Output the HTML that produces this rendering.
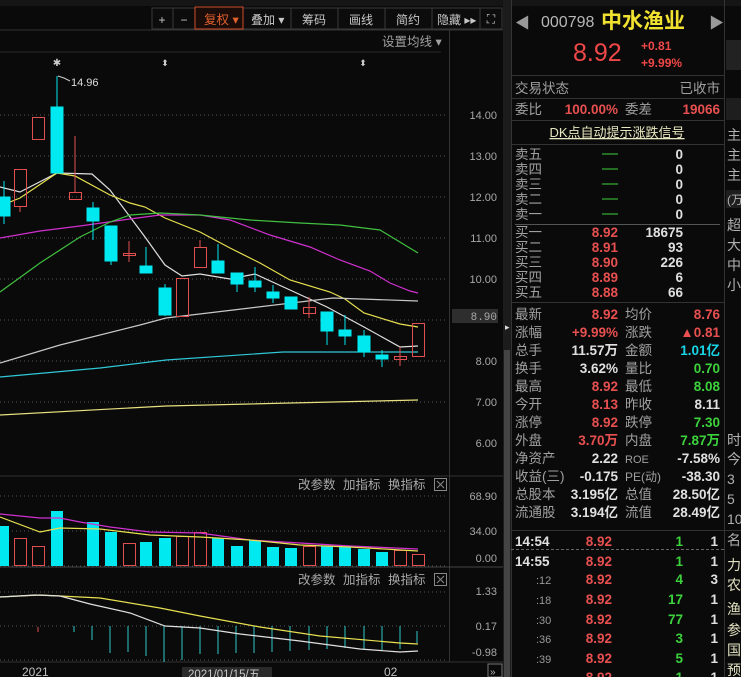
<!DOCTYPE html>
<html><head><meta charset="utf-8"><style>
html,body{margin:0;padding:0;background:#0a0a0a;overflow:hidden}
svg{display:block}
text{font-family:"Liberation Sans","Noto Sans CJK SC",sans-serif}
.ax{fill:#a8a8a8;font-size:11px;font-family:"Liberation Mono","Noto Sans CJK SC",monospace}
.tb{fill:#c8c8c8;font-size:12px}
.lb{fill:#a0a0a0;font-size:13.5px}
.r{fill:#e85050;font-weight:bold;font-size:13.5px}
.g{fill:#3cd23c;font-weight:bold;font-size:13.5px}
.w{fill:#e0e0e0;font-weight:bold;font-size:13.5px}
.c{fill:#19d6e6;font-weight:bold;font-size:13.5px}
</style></head><body>
<svg width="741" height="677" viewBox="0 0 741 677" xmlns="http://www.w3.org/2000/svg">
<rect width="741" height="677" fill="#0a0a0a"/>
<!-- top partial row -->
<rect x="0" y="0" width="741" height="6" fill="#151515"/>
<!-- toolbar -->
<line x1="0" y1="30" x2="503" y2="30" stroke="#333"/>
<g fill="#0c0c0c" stroke="#3a3a3a">
<rect x="152" y="8" width="21" height="21"/><rect x="173" y="8" width="22" height="21"/>
<rect x="243" y="8" width="48" height="21"/><rect x="291" y="8" width="47" height="21"/>
<rect x="338" y="8" width="47" height="21"/><rect x="385" y="8" width="47" height="21"/>
<rect x="432" y="8" width="48" height="21"/><rect x="480" y="8" width="22" height="21"/>
</g>
<rect x="195" y="7" width="48" height="22" fill="#1a0c08" stroke="#d0502a"/>
<text x="162" y="24" class="tb" text-anchor="middle" font-size="16">+</text>
<text x="184" y="24" class="tb" text-anchor="middle" font-size="16">−</text>
<text x="204" y="24" fill="#e0602e" font-size="12.5">复权 ▾</text>
<text x="251" y="24" class="tb">叠加 ▾</text>
<text x="302" y="24" class="tb">筹码</text>
<text x="349" y="24" class="tb">画线</text>
<text x="396" y="24" class="tb">简约</text>
<text x="437" y="24" class="tb">隐藏 ▸▸</text>
<text x="491" y="23" class="tb" text-anchor="middle" font-size="13">⛶</text>
<text x="382" y="46" fill="#a0a0a0" font-size="12.5">设置均线 ▾</text>
<line x1="0" y1="52" x2="441" y2="52" stroke="#2a2a2a"/>
<!-- axes -->
<line x1="449.5" y1="30" x2="449.5" y2="662" stroke="#333"/>
<rect x="503" y="0" width="8" height="677" fill="#1c1c1c"/>
<rect x="504" y="350" width="6" height="350" fill="#444"/>
<text x="505" y="330" fill="#ddd" font-size="9">▸</text>
<line x1="0" y1="476" x2="503" y2="476" stroke="#333"/>
<line x1="0" y1="567" x2="503" y2="567" stroke="#444"/>
<line x1="0" y1="662" x2="503" y2="662" stroke="#333"/>
<!-- grid -->
<g stroke="#555" stroke-dasharray="1,3">
<line x1="0" y1="115" x2="448" y2="115"/><line x1="0" y1="156" x2="448" y2="156"/>
<line x1="0" y1="197" x2="448" y2="197"/><line x1="0" y1="238" x2="448" y2="238"/>
<line x1="0" y1="279" x2="448" y2="279"/><line x1="0" y1="320" x2="448" y2="320"/>
<line x1="0" y1="361" x2="448" y2="361"/><line x1="0" y1="402" x2="448" y2="402"/>
<line x1="0" y1="496" x2="448" y2="496"/><line x1="0" y1="531" x2="448" y2="531"/>
<line x1="0" y1="566" x2="448" y2="566"/>
<line x1="0" y1="592" x2="448" y2="592"/><line x1="0" y1="626" x2="448" y2="626"/>
<line x1="0" y1="660" x2="448" y2="660"/>
</g>
<g class="ax" text-anchor="end">
<text x="497" y="119">14.00</text><text x="497" y="160">13.00</text><text x="497" y="201">12.00</text>
<text x="497" y="242">11.00</text><text x="497" y="283">10.00</text><text x="497" y="365">8.00</text>
<text x="497" y="406">7.00</text><text x="497" y="447">6.00</text>
<text x="497" y="500">68.90</text><text x="497" y="535">34.00</text><text x="497" y="562">0.00</text>
<text x="497" y="595">1.33</text><text x="497" y="630">0.17</text><text x="497" y="656">-0.98</text>
</g>
<rect x="452" y="309" width="46" height="14" fill="#2e2e2e"/>
<text x="497" y="320" class="ax" text-anchor="end" fill="#ddd">8.90</text>
<!-- markers -->
<text x="57" y="66" fill="#ccc" font-size="10" text-anchor="middle">✱</text>
<text x="165" y="66" fill="#ccc" font-size="9" text-anchor="middle">⬍</text>
<text x="363" y="66" fill="#ccc" font-size="9" text-anchor="middle">⬍</text>
<polyline points="58,76 64,78 70,81" fill="none" stroke="#ccc"/>
<text x="71" y="86" fill="#ddd" font-size="11" font-family="Liberation Mono,monospace">14.96</text>
<!-- MAs -->
<g fill="none" stroke-width="1.2">
<polyline stroke="#e0e0e0" points="0,187 20,192 57,173 92,174 110,190 145,237 165,265 182,276 200,274 230,279 255,274 290,290 327,307 364,327 400,347 418,346"/>
<polyline stroke="#e8e050" points="0,206 20,198 57,173 75,176 110,195 130,203 145,207 165,218 200,232 230,248 260,263 290,280 330,292 345,299 364,313 400,324 418,327"/>
<polyline stroke="#d030d0" points="0,238 40,231 80,226 130,219 160,215 200,215 230,220 270,235 310,247 340,260 370,271 390,283 410,291 418,293"/>
<polyline stroke="#40c040" points="0,292 40,263 80,237 110,222 130,215 160,213 200,215 250,220 300,223 340,225 380,230 418,253"/>
<polyline stroke="#c8c8c8" points="0,363 60,345 140,325 166,318 250,308 333,298 418,301"/>
<polyline stroke="#30c8d8" points="0,377 100,368 166,360 283,352 418,352"/>
<polyline stroke="#e8e080" points="0,415 166,406 333,402 418,400"/>
</g>
<!-- candles -->
<g stroke="#00e8f0" fill="#00e8f0">
<line x1="4" y1="181" x2="4" y2="224"/><rect x="-2" y="197" width="12" height="19"/>
<line x1="57" y1="76" x2="57" y2="107"/><rect x="51" y="107" width="12" height="66"/>
<line x1="93" y1="202" x2="93" y2="240"/><rect x="87" y="208" width="12" height="13"/>
<line x1="111" y1="226" x2="111" y2="265"/><rect x="105" y="226" width="12" height="35"/>
<line x1="146" y1="247" x2="146" y2="273"/><rect x="140" y="266" width="12" height="7"/>
<line x1="165" y1="284" x2="165" y2="316"/><rect x="159" y="288" width="12" height="27"/>
<line x1="218" y1="244" x2="218" y2="273"/><rect x="212" y="261" width="12" height="12"/>
<line x1="237" y1="273" x2="237" y2="292"/><rect x="231" y="273" width="12" height="11"/>
<line x1="255" y1="267" x2="255" y2="292"/><rect x="249" y="281" width="12" height="6"/>
<line x1="273" y1="285" x2="273" y2="303"/><rect x="267" y="292" width="12" height="6"/>
<rect x="285" y="297" width="12" height="12"/>
<line x1="327" y1="312" x2="327" y2="345"/><rect x="321" y="312" width="12" height="19"/>
<line x1="345" y1="315" x2="345" y2="345"/><rect x="339" y="330" width="12" height="6"/>
<line x1="364" y1="330" x2="364" y2="357"/><rect x="358" y="336" width="12" height="16"/>
<line x1="382" y1="350" x2="382" y2="367"/><rect x="376" y="355" width="12" height="4"/>
</g>
<g stroke="#e05050" fill="none">
<rect x="14.5" y="169.5" width="12" height="37"/><line x1="20" y1="206" x2="20" y2="212"/>
<rect x="32.5" y="117.5" width="12" height="22"/>
<line x1="75" y1="136" x2="75" y2="192"/><rect x="69.5" y="192.5" width="12" height="7"/>
<line x1="129" y1="241" x2="129" y2="262"/><rect x="123.5" y="253.5" width="12" height="2"/>
<rect x="176.5" y="278.5" width="12" height="38"/>
<line x1="200" y1="240" x2="200" y2="247"/><rect x="194.5" y="247.5" width="12" height="20"/>
<line x1="309" y1="297" x2="309" y2="318"/><rect x="303.5" y="307.5" width="12" height="6"/>
<line x1="400" y1="347" x2="400" y2="366"/><rect x="394.5" y="356.5" width="12" height="3"/>
<rect x="412.5" y="323.5" width="12" height="33"/>
</g>
<!-- volume -->
<g fill="#00e8f0">
<rect x="-3" y="526" width="12" height="40"/><rect x="51" y="511" width="12" height="55"/>
<rect x="87" y="522" width="12" height="44"/><rect x="105" y="532" width="12" height="34"/>
<rect x="140" y="542" width="12" height="24"/><rect x="159" y="538" width="12" height="28"/>
<rect x="212" y="538" width="12" height="28"/><rect x="231" y="546" width="12" height="20"/>
<rect x="249" y="540" width="12" height="26"/><rect x="267" y="547" width="12" height="19"/>
<rect x="285" y="548" width="12" height="18"/><rect x="321" y="546" width="12" height="20"/>
<rect x="339" y="547" width="12" height="19"/><rect x="358" y="549" width="12" height="17"/>
<rect x="376" y="552" width="12" height="14"/>
</g>
<g fill="none" stroke="#e05050">
<rect x="14.5" y="538.5" width="12" height="27"/><rect x="32.5" y="546.5" width="12" height="19"/>
<rect x="123.5" y="543.5" width="12" height="22"/><rect x="176.5" y="536.5" width="12" height="29"/>
<rect x="194.5" y="532.5" width="12" height="33"/><rect x="303.5" y="546.5" width="12" height="19"/>
<rect x="394.5" y="550.5" width="12" height="15"/><rect x="412.5" y="554.5" width="12" height="11"/>
</g>
<g fill="none" stroke-width="1.2">
<polyline stroke="#d030d0" points="0,514 40,518 60,518 80,522 110,527 150,532 200,533 250,540 300,543 350,546 418,549"/>
<polyline stroke="#e8e050" points="0,517 40,532 60,528 100,529 150,535 200,537 250,540 300,545 350,547 418,551"/>
</g>
<g fill="#a8a8a8" font-size="12.5">
<text x="298" y="489">改参数</text><text x="343" y="489">加指标</text><text x="388" y="489">换指标</text>
<text x="298" y="584">改参数</text><text x="343" y="584">加指标</text><text x="388" y="584">换指标</text>
</g>
<g stroke="#888" fill="none"><rect x="434.5" y="478.5" width="12" height="12"/><rect x="434.5" y="573.5" width="12" height="12"/>
<path d="M437 481l7 7M444 481l-7 7M437 576l7 7M444 576l-7 7"/></g>
<!-- MACD -->
<g stroke="#30c8c8">
<line x1="74" y1="626" x2="74" y2="632"/><line x1="92" y1="626" x2="92" y2="640"/>
<line x1="110" y1="626" x2="110" y2="653"/><line x1="128" y1="626" x2="128" y2="652"/>
<line x1="146" y1="626" x2="146" y2="656"/><line x1="164" y1="626" x2="164" y2="662"/>
<line x1="182" y1="626" x2="182" y2="660"/><line x1="200" y1="626" x2="200" y2="654"/>
<line x1="218" y1="626" x2="218" y2="654"/><line x1="236" y1="626" x2="236" y2="653"/>
<line x1="254" y1="626" x2="254" y2="653"/><line x1="272" y1="626" x2="272" y2="652"/>
<line x1="290" y1="626" x2="290" y2="651"/><line x1="309" y1="626" x2="309" y2="650"/>
<line x1="327" y1="626" x2="327" y2="649"/><line x1="345" y1="626" x2="345" y2="648"/>
<line x1="364" y1="626" x2="364" y2="650"/><line x1="382" y1="626" x2="382" y2="650"/>
<line x1="400" y1="626" x2="400" y2="649"/><line x1="417" y1="631" x2="417" y2="643"/>
</g>
<line x1="38" y1="627" x2="38" y2="632" stroke="#e05050"/>
<g fill="none" stroke-width="1.2">
<polyline stroke="#e8e050" points="0,597 40,595 60,596 100,598 160,608 200,616 260,627 320,636 400,643 418,644"/>
<polyline stroke="#e0e0e0" points="0,597 35,595 60,596 90,604 130,613 165,626 200,628 240,634 300,641 360,649 400,652 418,651"/>
</g>
<text x="22" y="676" fill="#c0c0c0" font-size="12">2021</text>
<rect x="182" y="667" width="90" height="12" fill="#2a2a2a"/>
<text x="188" y="678" fill="#c8c8c8" font-size="11.5">2021/01/15/五</text>
<text x="384" y="676" fill="#c0c0c0" font-size="12">02</text>
<rect x="488" y="664" width="14" height="13" fill="none" stroke="#777"/>
<text x="490" y="675" fill="#bbb" font-size="10">»</text>
<!-- RIGHT PANEL -->
<line x1="511.5" y1="0" x2="511.5" y2="677" stroke="#333"/>
<line x1="724.5" y1="0" x2="724.5" y2="677" stroke="#333"/>
<text x="515" y="28" fill="#999" font-size="15">◀</text>
<text x="541" y="27" fill="#b8b8b8" font-size="16">000798</text>
<text x="601" y="28" fill="#f0e030" font-size="21" font-weight="bold">中水渔业</text>
<text x="709" y="28" fill="#999" font-size="15">▶</text>
<text x="573" y="61" fill="#f04848" font-size="25">8.92</text>
<text x="641" y="50" fill="#f04848" font-size="12" font-weight="bold">+0.81</text>
<text x="641" y="67" fill="#f04848" font-size="12" font-weight="bold">+9.99%</text>
<g stroke="#333">
<line x1="511" y1="75.5" x2="724" y2="75.5"/><line x1="511" y1="98.5" x2="724" y2="98.5"/>
<line x1="511" y1="120.5" x2="724" y2="120.5"/><line x1="511" y1="144.5" x2="724" y2="144.5"/>
<line x1="511" y1="302.5" x2="724" y2="302.5"/><line x1="511" y1="530.5" x2="741" y2="530.5"/>
<line x1="511" y1="549.5" x2="724" y2="549.5" stroke="#666" stroke-dasharray="3,2"/>
</g>
<line x1="515" y1="224.5" x2="720" y2="224.5" stroke="#555"/>
<text x="515" y="93" class="lb">交易状态</text><text x="720" y="93" class="lb" text-anchor="end">已收市</text>
<text x="515" y="114" class="lb">委比</text><text x="618" y="114" class="r" text-anchor="end">100.00%</text>
<text x="625" y="114" class="lb">委差</text><text x="720" y="114" class="r" text-anchor="end">19066</text>
<text x="617" y="137" fill="#e8e8c0" font-size="13" text-anchor="middle" text-decoration="underline">DK点自动提示涨跌信号</text>
<g class="lb" font-size="13">
<text x="515" y="159">卖五</text><text x="515" y="174">卖四</text><text x="515" y="189">卖三</text><text x="515" y="204">卖二</text><text x="515" y="219">卖一</text>
<text x="515" y="237">买一</text><text x="515" y="252">买二</text><text x="515" y="267">买三</text><text x="515" y="282">买四</text><text x="515" y="297">买五</text>
</g>
<g stroke="#3cd23c"><line x1="602" y1="154" x2="618" y2="154"/><line x1="602" y1="169" x2="618" y2="169"/><line x1="602" y1="184" x2="618" y2="184"/><line x1="602" y1="199" x2="618" y2="199"/><line x1="602" y1="214" x2="618" y2="214"/></g>
<g class="w" text-anchor="end" font-size="13">
<text x="683" y="159">0</text><text x="683" y="174">0</text><text x="683" y="189">0</text><text x="683" y="204">0</text><text x="683" y="219">0</text>
<text x="683" y="237">18675</text><text x="683" y="252">93</text><text x="683" y="267">226</text><text x="683" y="282">6</text><text x="683" y="297">66</text>
</g>
<g class="r" text-anchor="end" font-size="13">
<text x="618" y="237">8.92</text><text x="618" y="252">8.91</text><text x="618" y="267">8.90</text><text x="618" y="282">8.89</text><text x="618" y="297">8.88</text>
</g>
<g class="lb">
<text x="515" y="319">最新</text><text x="515" y="337">涨幅</text><text x="515" y="355">总手</text><text x="515" y="373">换手</text>
<text x="515" y="391">最高</text><text x="515" y="409">今开</text><text x="515" y="427">涨停</text><text x="515" y="445">外盘</text>
<text x="515" y="463">净资产</text><text x="515" y="481">收益(三)</text><text x="515" y="499">总股本</text><text x="515" y="517">流通股</text>
<text x="625" y="319">均价</text><text x="625" y="337">涨跌</text><text x="625" y="355">金额</text><text x="625" y="373">量比</text>
<text x="625" y="391">最低</text><text x="625" y="409">昨收</text><text x="625" y="427">跌停</text><text x="625" y="445">内盘</text>
<text x="625" y="463" font-size="11">ROE</text><text x="625" y="481" font-size="12">PE(动)</text><text x="625" y="499">总值</text><text x="625" y="517">流值</text>
</g>
<g text-anchor="end">
<text x="618" y="319" class="r">8.92</text><text x="618" y="337" class="r">+9.99%</text><text x="618" y="355" class="w">11.57万</text>
<text x="618" y="373" class="w">3.62%</text><text x="618" y="391" class="r">8.92</text><text x="618" y="409" class="r">8.13</text>
<text x="618" y="427" class="r">8.92</text><text x="618" y="445" class="r">3.70万</text><text x="618" y="463" class="w">2.22</text>
<text x="618" y="481" class="w">-0.175</text><text x="618" y="499" class="w">3.195亿</text><text x="618" y="517" class="w">3.194亿</text>
<text x="720" y="319" class="r">8.76</text><text x="720" y="337" class="r">▲0.81</text><text x="720" y="355" class="c">1.01亿</text>
<text x="720" y="373" class="g">0.70</text><text x="720" y="391" class="g">8.08</text><text x="720" y="409" class="w">8.11</text>
<text x="720" y="427" class="g">7.30</text><text x="720" y="445" class="g">7.87万</text><text x="720" y="463" class="w">-7.58%</text>
<text x="720" y="481" class="w">-38.30</text><text x="720" y="499" class="w">28.50亿</text><text x="720" y="517" class="w">28.49亿</text>
</g>
<g>
<text x="515" y="546" class="w" fill="#d0d0d0">14:54</text><text x="515" y="566" class="w" fill="#d0d0d0">14:55</text>
<g fill="#999" font-size="11"><text x="536" y="584">:12</text><text x="536" y="604">:18</text><text x="536" y="624">:30</text><text x="536" y="643">:36</text><text x="536" y="663">:39</text></g>
<g class="r" text-anchor="end"><text x="612" y="546">8.92</text><text x="612" y="566">8.92</text><text x="612" y="584">8.92</text><text x="612" y="604">8.92</text><text x="612" y="624">8.92</text><text x="612" y="643">8.92</text><text x="612" y="663">8.92</text><text x="612" y="682">8.92</text></g>
<g class="g" text-anchor="end"><text x="683" y="546">1</text><text x="683" y="566">1</text><text x="683" y="584">4</text><text x="683" y="604">17</text><text x="683" y="624">77</text><text x="683" y="643">3</text><text x="683" y="663">5</text><text x="683" y="682">1</text></g>
<g class="w" text-anchor="end"><text x="718" y="546">1</text><text x="718" y="566">1</text><text x="718" y="584">3</text><text x="718" y="604">1</text><text x="718" y="624">1</text><text x="718" y="643">1</text><text x="718" y="663">1</text><text x="718" y="682">1</text></g>
</g>
<!-- far right partial column -->
<rect x="726" y="40" width="15" height="30" fill="#222"/>
<rect x="726" y="98" width="15" height="22" fill="#1e1e1e"/>
<rect x="726" y="190" width="15" height="18" fill="#1e1e1e"/>
<g fill="#b0b0b0" font-size="14">
<text x="727" y="140">主</text><text x="727" y="160">主</text><text x="727" y="180">主</text>
<text x="727" y="204" font-size="12">(万</text><text x="727" y="230">超</text><text x="727" y="250">大</text>
<text x="727" y="270">中</text><text x="727" y="290">小</text>
<text x="727" y="445">时</text><text x="727" y="464">今</text><text x="727" y="484">3</text><text x="727" y="504">5</text><text x="727" y="524">10</text>
<text x="727" y="545">名</text>
</g>
<g fill="#e0e0c0" font-size="14">
<text x="727" y="570">力</text><text x="727" y="590">农</text><text x="727" y="614">渔</text><text x="727" y="635">参</text><text x="727" y="655">国</text><text x="727" y="675">预</text>
</g>
</svg>
</body></html>
